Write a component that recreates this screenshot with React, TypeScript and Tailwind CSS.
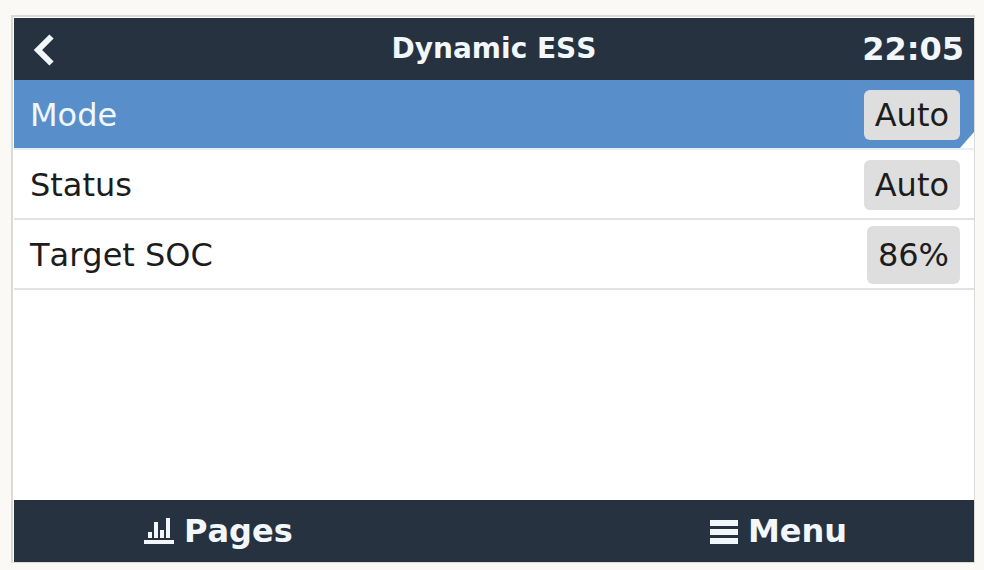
import React, { useState } from 'react';

interface Setting {
  id: string;
  label: string;
  value: string;
  editable?: boolean;
  tall?: boolean;
}

const SETTINGS: Setting[] = [
  { id: 'mode', label: 'Mode', value: 'Auto', editable: true },
  { id: 'status', label: 'Status', value: 'Auto' },
  { id: 'soc', label: 'Target SOC', value: '86%', tall: true },
];

function PagesIcon() {
  return (
    <svg width="30" height="28" viewBox="0 0 30 28" fill="currentColor" aria-hidden="true">
      <path d="M0 23h30v4H0z" />
      <path d="M4 15h4v6H4zM10 5h4v16h-4zM16 13h4v8h-4zM22 1h4v20h-4z" />
    </svg>
  );
}

function MenuIcon() {
  return (
    <svg width="28" height="28" viewBox="0 0 28 28" fill="currentColor" aria-hidden="true">
      <path d="M0 3h28v6H0zM0 12h28v6H0zM0 21h28v6H0z" />
    </svg>
  );
}

interface SettingRowProps {
  setting: Setting;
  selected: boolean;
  onSelect: () => void;
}

function SettingRow({ setting, selected, onSelect }: SettingRowProps) {
  return (
    <li>
      <button
        onClick={onSelect}
        className={`relative flex h-[70px] w-full items-center justify-between border-b-2 pl-4 pr-[14px] pt-0.5 text-left text-[32px] leading-[50px] ${
          selected ? 'border-[#e4f1fb] bg-[#588fcb] bg-clip-padding text-[#f0f8ff]' : 'border-[#e2e2e2] text-[#1c1c1c]'
        }`}
      >
        <span>{setting.label}</span>
        <span className={`rounded-md bg-[#dedede] px-[11px] text-[#1c1c1c] ${setting.tall ? 'py-1' : ''}`}>
          {setting.value}
        </span>
        {/* Corner mark on rows that can be changed */}
        {setting.editable && (
          <svg className="absolute bottom-0 right-0" width="14" height="16" viewBox="0 0 14 16" aria-hidden="true">
            <path d="M14 0v16H0z" fill="#fff" />
          </svg>
        )}
      </button>
    </li>
  );
}

export default function App() {
  const [selected, setSelected] = useState('mode');

  return (
    <div className="flex min-h-screen flex-col bg-[#faf9f5] pb-[7px] pl-[11px] pr-[9px] pt-[15px] font-['DejaVu_Sans',sans-serif] [font-kerning:none]">
      <div className="flex flex-1 flex-col border-b border-l-2 border-r border-t-2 border-[#dcdad5] bg-white pl-px pt-px">
        {/* Header */}
        <header className="grid h-[62px] grid-cols-[1fr_auto_1fr] items-center bg-[#26323f] px-[10px] font-bold text-[#f2f7fc]">
          <button aria-label="Back" className="justify-self-start pl-1.5">
            <svg width="26" height="34" viewBox="0 0 26 34" fill="none" stroke="currentColor" strokeWidth="6" aria-hidden="true">
              <path d="M21.500 4.500L8 18l13.500 13.500" />
            </svg>
          </button>
          <h1 className="text-[28px] leading-8">Dynamic ESS</h1>
          <time className="justify-self-end text-[32px] leading-8">22:05</time>
        </header>

        <main className="flex-1">
          <ul>
            {SETTINGS.map(s => (
              <SettingRow key={s.id} setting={s} selected={s.id === selected} onSelect={() => setSelected(s.id)} />
            ))}
          </ul>
        </main>

        {/* Toolbar */}
        <footer className="flex h-[62px] items-center justify-between bg-[#26323f] pl-[130px] pr-[127px] text-[32px] font-bold leading-8 text-[#f2f7fc]">
          <button className="flex items-center gap-2.5">
            <PagesIcon />
            Pages
          </button>
          <button className="flex items-center gap-2.5">
            <MenuIcon />
            Menu
          </button>
        </footer>
      </div>
    </div>
  );
}
